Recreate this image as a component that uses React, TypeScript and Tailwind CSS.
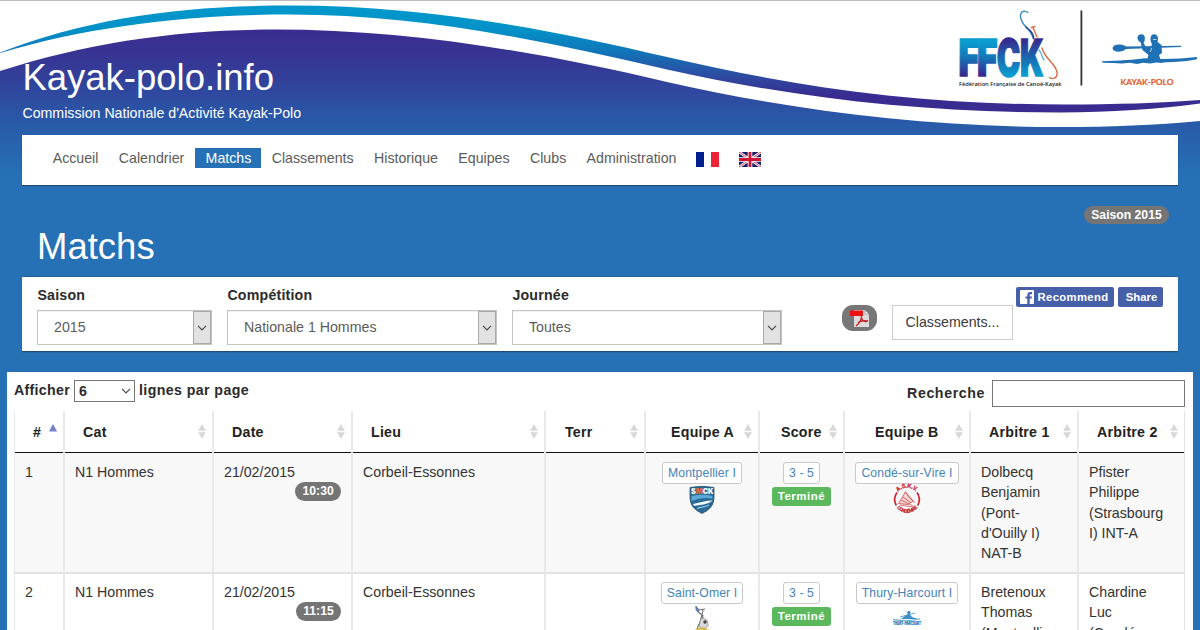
import React from "react";

type Match = {
  id: number;
  time: string;
  teamA: string;
  teamB: string;
  logoA: React.ReactNode;
  logoB: React.ReactNode;
  ref1: string[];
  ref2: string[];
};

function Waves() {
  return (
    <svg className="absolute inset-x-0 top-0 -z-10" width="1200" height="205" viewBox="0 0 1200 205">
      <defs>
        <linearGradient id="sky" gradientUnits="userSpaceOnUse" x1="0" y1="30" x2="0" y2="175">
          <stop offset="0" stopColor="#3a2c90" />
          <stop offset="0.22" stopColor="#363795" />
          <stop offset="0.65" stopColor="#285ba9" />
          <stop offset="1" stopColor="#2670b5" />
        </linearGradient>
        <linearGradient id="band" gradientUnits="userSpaceOnUse" x1="0" y1="5" x2="0" y2="95">
          <stop offset="0" stopColor="#0398cc" />
          <stop offset="0.28" stopColor="#0291c7" />
          <stop offset="0.5" stopColor="#0f78ba" />
          <stop offset="0.8" stopColor="#2f49a0" />
          <stop offset="1" stopColor="#382c91" />
        </linearGradient>
      </defs>
      <rect width="1200" height="205" fill="url(#sky)" />
      <path
        d="M0 0H1200V121C1155 125 1110 127 1060 127C925 127 790 110 667 82C545 53 410 29.500 275 29.500C180 29.500 90 42 0 71Z"
        fill="#fff"
      />
      <path
        d="M0 52.500C90 18 180 5.500 290 5.500C420 5.500 540 27 667 57C800 88 920 104.500 1065 104.500C1115 104.500 1160 103 1200 100V103.500C1160 109 1110 112.500 1060 112.500C925 112.500 800 99 667 69.500C540 40 420 14.500 290 14.500C190 14.500 90 26 0 53Z"
        fill="url(#band)"
      />
      <rect width="1200" height="1" fill="#bdbdbd" />
    </svg>
  );
}

function FederationLogo() {
  return (
    <svg className="absolute left-[950px] top-0" width="250" height="100" viewBox="950 0 250 100">
      <defs>
        <linearGradient id="ff" gradientUnits="userSpaceOnUse" x1="0" y1="38" x2="0" y2="77">
          <stop offset="0.1" stopColor="#0a9dcf" />
          <stop offset="0.5" stopColor="#1475b9" />
          <stop offset="0.95" stopColor="#352b8e" />
        </linearGradient>
        <linearGradient id="ck" gradientUnits="userSpaceOnUse" x1="0" y1="38" x2="0" y2="77">
          <stop offset="0.05" stopColor="#352b8e" />
          <stop offset="0.5" stopColor="#1b67b0" />
          <stop offset="0.95" stopColor="#0a9dcf" />
        </linearGradient>
      </defs>
      <g fontFamily="Inter, 'Liberation Sans', sans-serif" fontWeight="900" fontSize="51.500" strokeLinejoin="miter">
        <g fill="url(#ff)" stroke="url(#ff)" strokeWidth="1.600">
          <text x="958.500" y="76.300" textLength="20.500" lengthAdjust="spacingAndGlyphs">F</text>
          <text x="977" y="76.300" textLength="20.500" lengthAdjust="spacingAndGlyphs">F</text>
        </g>
        <g fill="#fff" stroke="#fff" strokeWidth="4">
          <text x="996.800" y="76.300" textLength="23.500" lengthAdjust="spacingAndGlyphs" aria-hidden="true">C</text>
        </g>
        <g fill="url(#ck)" stroke="url(#ck)" strokeWidth="1.600">
          <text x="996.800" y="76.300" textLength="23.500" lengthAdjust="spacingAndGlyphs">C</text>
          <text x="1020" y="76.300" textLength="23.500" lengthAdjust="spacingAndGlyphs">K</text>
        </g>
      </g>
      <g fill="none" strokeLinecap="round">
        <path d="M1028 12.500C1023 9 1019 13 1021 19C1023 27 1031 29 1033 38" stroke="#2b86bd" strokeWidth="1.300" />
        <path d="M1026 27C1031 31 1033 33 1034 39" stroke="#303c91" strokeWidth="1.500" />
        <path d="M1031.500 27.500L1035 26.500M1033 27.500L1037 37M1042 48C1045 59 1055 63 1057 72C1058 78 1053 80 1049.500 77.500" stroke="#d96a44" strokeWidth="1.400" />
        <path d="M1039 50C1042 53 1042 58 1044 60" stroke="#4fa8d6" strokeWidth="1.200" />
      </g>
      <text x="959" y="85.500" fontFamily="'Open Sans', 'Noto Sans', sans-serif" fontWeight="600" fontSize="5.800" fill="#222" textLength="102.500" lengthAdjust="spacingAndGlyphs">
        Fédération Française de Canoë-Kayak
      </text>
      <rect x="1080.500" y="10.500" width="1.800" height="75" fill="#333" />
      <g fill="#2070b5">
        <path d="M1101.500 61.200C1120 60.500 1134 60 1145 58.300C1162 59.500 1180 59 1196.800 57C1197.500 58 1197 59.300 1196 59.600C1186 61.500 1176 62 1166 62.200L1161 63L1157 62.400L1150 63.500L1143 62.800L1137 64L1130 62.700L1122 63.500L1113 63L1103 62.700Z" />
        <path d="M1112.500 48C1113.500 44 1121 43.500 1126 46.500L1181 45.700L1181 46.900L1126 49C1122 52.500 1113 53 1112.500 48Z" />
        <path d="M1137.500 37.500C1138 33.500 1144.500 33 1144.800 37.500C1145 40 1144.500 42 1143.500 43L1146 47L1151 47L1152 44C1149.500 40 1150 34.500 1154 34.200C1158.500 34.500 1158.500 39 1157.500 42L1161.500 45L1162 53L1159 55L1161 61L1146.500 61L1148.500 55L1142.500 50L1140.500 42C1138.500 41.500 1137.500 40 1137.500 37.500Z" />
      </g>
      <path d="M1153 39.500H1156.500M1150.500 52L1151.500 48" stroke="#d8e9f5" strokeWidth=".8" />
      <text x="1120.500" y="85" fontFamily="Lato, sans-serif" fontWeight="700" fontSize="8.300" fill="#e0602f" stroke="#e0602f" strokeWidth=".2" textLength="53" lengthAdjust="spacingAndGlyphs">
        KAYAK-POLO
      </text>
    </svg>
  );
}

function FrenchFlag() {
  return (
    <svg width="23" height="15" viewBox="0 0 23 15">
      <rect width="8" height="15" fill="#001f8f" />
      <rect x="8" width="7" height="15" fill="#fff" />
      <rect x="15" width="8" height="15" fill="#ee2436" />
    </svg>
  );
}

function BritishFlag() {
  return (
    <svg width="22" height="15" viewBox="0 0 22 15">
      <rect width="22" height="15" fill="#1a1f68" />
      <path d="M0 0L22 15M22 0L0 15" stroke="#fff" strokeWidth="2.600" />
      <path d="M0 0L22 15M22 0L0 15" stroke="#d3314b" strokeWidth=".9" />
      <path d="M11 0V15M0 7.500H22" stroke="#fff" strokeWidth="4.600" />
      <path d="M11 0V15M0 7.500H22" stroke="#cf1533" strokeWidth="2.800" />
    </svg>
  );
}

function Chevron() {
  return (
    <svg width="10" height="6" viewBox="0 0 10 6">
      <path d="M1 .8L5 4.800L9 .8" fill="none" stroke="#4a4a4a" strokeWidth="1.200" />
    </svg>
  );
}

function PdfIcon() {
  return (
    <svg width="20" height="19" viewBox="0 0 20 19">
      <path d="M4 1H15L19 5V18H4Z" fill="#dcdcdc" />
      <path d="M15 1V5H19Z" fill="#fff" stroke="#666" strokeWidth=".5" />
      <rect y="1.500" width="13" height="5.500" fill="#ee1111" />
      <path d="M11.500 5C12 9 11 13 6 17M11.500 9C13 13 16 13.500 18 11.500M8 13.500C11 12 15 11 18 12" fill="none" stroke="#c62323" strokeWidth="1.200" />
    </svg>
  );
}

function MontpellierLogo() {
  return (
    <svg width="26" height="28" viewBox="0 0 26 28">
      <path d="M1 1.500Q13-.8 25 1.500V12Q25 22 13 27.500Q1 22 1 12Z" fill="#2a6a94" stroke="#29506e" strokeWidth=".8" />
      <path d="M2.500 10Q13 7.500 23.500 10V12.500L17 12Q10 12 2.500 15Z" fill="#5aa9d6" />
      <path d="M4 18C10 17 17 14 23.500 14.500C19 19 11 18.500 5 20Z" fill="#f4fbff" />
      <path d="M8 22.500C13 20.500 17 21 20 19" fill="none" stroke="#8dcbe9" strokeWidth="1.200" />
      <text x="2" y="8.300" fontFamily="Inter, sans-serif" fontWeight="900" fontSize="7.500" fill="#fff" textLength="22.500" lengthAdjust="spacingAndGlyphs">
        S<tspan fill="#e8663a">M</tspan>CK
      </text>
    </svg>
  );
}

function CondeLogo() {
  return (
    <svg className="overflow-visible" width="28" height="28" viewBox="0 0 28 28">
      <defs>
        <path id="condeTop" d="M5 5.800A12 12 0 0 1 23 5.800" />
        <path id="condeBottom" d="M2.500 19.500A12.700 12.700 0 0 0 25.500 19.500" />
      </defs>
      <path d="M4 6.500A12.300 12.300 0 0 0 3.300 19.500M24 6.500A12.300 12.300 0 0 1 24.700 19.500" fill="none" stroke="#c9262e" strokeWidth="1.700" />
      <path d="M12.500 5.500L8.500 13L5.500 17.500L15 18.500L20 15L16 11Z" fill="#f6d3d2" stroke="#cf4a4a" strokeWidth=".8" />
      <path d="M8 14L20 20M10 11L18 17M13 7L22 17M7 19L20 21" fill="none" stroke="#cb3c3e" strokeWidth=".7" />
      <g fontFamily="'Liberation Sans', sans-serif" fontWeight="700" fill="#c4222a" stroke="#c4222a" strokeWidth=".25">
        <text fontSize="5.800">
          <textPath href="#condeTop" textLength="20">A.S.K.V.</textPath>
        </text>
        <text fontSize="4.800">
          <textPath href="#condeBottom" startOffset="2.500" textLength="24">CONDÉ/VIRE</textPath>
        </text>
      </g>
    </svg>
  );
}

function SaintOmerLogo() {
  return (
    <svg width="22" height="28" viewBox="0 0 22 28">
      <path d="M5 1L8 4L14 3M6 5L11 9L9 16L6 23M11 9L12 4M12 9L11 18" fill="none" stroke="#6a6a70" strokeWidth="1.100" />
      <path d="M5 0L5.500 4L8 5" fill="none" stroke="#5674bd" strokeWidth="1.500" />
      <path d="M10 12Q18 12 17 20Q13 25 8 20Z" fill="#d8d7d9" stroke="#777" strokeWidth=".6" />
      <circle cx="14" cy="16" r="1.700" fill="#4b3c3c" />
      <path d="M4 25Q9 20 18 25" fill="none" stroke="#d5b43a" strokeWidth="1.800" />
    </svg>
  );
}

function ThuryLogo() {
  return (
    <svg width="30" height="28" viewBox="0 0 30 28">
      <path d="M9 13Q14 9 16 8L14 5L17 7.500L20 11L26 13Z" fill="#3b8fc8" />
      <path d="M8 11L23 7" stroke="#3b8fc8" strokeWidth=".8" />
      <circle cx="17" cy="6.500" r="1.400" fill="#2a7fbf" />
      <path d="M1 13.500Q15 16 28 12.800" fill="none" stroke="#77b6dd" strokeWidth="1.300" />
      <text x="1" y="18.800" fontFamily="Inter, sans-serif" fontWeight="900" fontSize="4.300" fill="#1b66a5" textLength="28" lengthAdjust="spacingAndGlyphs">
        THURY-HARCOURT
      </text>
    </svg>
  );
}

const nav = ["Accueil", "Calendrier", "Matchs", "Classements", "Historique", "Equipes", "Clubs", "Administration"];

const columns = [
  { label: "#", pad: "pl-[18px]" },
  { label: "Cat", pad: "pl-[18px]" },
  { label: "Date", pad: "pl-[18px]" },
  { label: "Lieu", pad: "pl-[18px]" },
  { label: "Terr", pad: "pl-[19px]" },
  { label: "Equipe A", pad: "pl-[25px]" },
  { label: "Score", pad: "pl-[21px]" },
  { label: "Equipe B", pad: "pl-[30px]" },
  { label: "Arbitre 1", pad: "pl-[18px]" },
  { label: "Arbitre 2", pad: "pl-[18px]" },
];

const grid = "grid grid-cols-[51px_149px_139px_193px_100px_114px_85px_126px_108px_106px]";
const cell = "border-r-2 border-r-[#e9e9e9] first:border-l first:border-l-[#e9e9e9] last:border-r last:border-r-[#e4e4e4]";

const matches: Match[] = [
  {
    id: 1,
    time: "10:30",
    teamA: "Montpellier I",
    teamB: "Condé-sur-Vire I",
    logoA: <MontpellierLogo />,
    logoB: <CondeLogo />,
    ref1: ["Dolbecq", "Benjamin", "(Pont-", "d'Ouilly I)", "NAT-B"],
    ref2: ["Pfister", "Philippe", "(Strasbourg", "I) INT-A"],
  },
  {
    id: 2,
    time: "11:15",
    teamA: "Saint-Omer I",
    teamB: "Thury-Harcourt I",
    logoA: <SaintOmerLogo />,
    logoB: <ThuryLogo />,
    ref1: ["Bretenoux", "Thomas", "(Montpellier"],
    ref2: ["Chardine", "Luc", "(Condé-"],
  },
];

function Select({ label, value, className }: { label: string; value: string; className: string }) {
  return (
    <div className={className}>
      <div className="h-[25px] pl-[0.400px] font-bold leading-[20px] tracking-[0.2px] text-[#2b2b2b]">{label}</div>
      <div className="flex h-[35px] border border-[#c4c4c4] bg-white text-[#5c5c5c] shadow-[inset_0_1px_1px_rgba(0,0,0,0.06)]">
        <div className="flex-1 pl-[16px] leading-[33px]">{value}</div>
        <div className="flex w-[18px] items-center justify-center border border-[#a9a9a9] bg-[#e2e2e2]">
          <Chevron />
        </div>
      </div>
    </div>
  );
}

function SortIcon({ active }: { active: boolean }) {
  return active ? (
    <svg className="mt-[13px]" width="8" height="8" viewBox="0 0 8 8">
      <path d="M4 0L8 7.500H0Z" fill="#777fcb" />
    </svg>
  ) : (
    <svg className="mt-[13px]" width="8" height="15" viewBox="0 0 8 15">
      <path d="M4 0L8 6.700H0ZM0 8.300H8L4 15Z" fill="#d8d8d8" />
    </svg>
  );
}

function Pill({ children }: { children: string }) {
  return (
    <span className="inline-block h-[18.500px] rounded-full bg-[#757575] px-[7.300px] text-[12.200px] font-bold leading-[18px] text-white">
      {children}
    </span>
  );
}

function Team({ name, logo }: { name: string; logo: React.ReactNode }) {
  return (
    <div className={`${cell} flex flex-col items-center pt-[9px]`}>
      <LinkBox>{name}</LinkBox>
      <div className="mt-[2px]">{logo}</div>
    </div>
  );
}

function LinkBox({ children }: { children: string }) {
  return (
    <span className="h-[22px] whitespace-nowrap rounded-[3px] border border-[#c9c9c9] bg-white px-[5px] text-[12.200px] leading-[20px] tracking-[0.120px] text-[#4483b8]">
      {children}
    </span>
  );
}

export default function App() {
  return (
    <div className="relative isolate h-[630px] w-[1200px] overflow-hidden bg-[#2670b5] font-['Liberation_Sans',Arial,sans-serif] text-[14.200px] leading-[20.300px]">
      <Waves />
      <FederationLogo />

      <header className="h-[135px] pl-[22.400px] pt-[58px] text-white">
        <h1 className="text-[36.500px] leading-[40px]">Kayak-polo.info</h1>
        <p className="mt-[5px] leading-[20px]">Commission Nationale d'Activité Kayak-Polo</p>
      </header>

      <nav className="mx-[22px] flex h-[50px] bg-white pl-[20.500px] pt-[13px] leading-[20px] text-[#5b5b5b] shadow-[0_1px_1px_#1e4a75]">
        {nav.map((item) => (
          <a
            key={item}
            className={
              item === "Matchs"
                ? "ml-px h-[20px] bg-[#2670b5] px-[10.150px] text-white"
                : "h-[20px] px-[10.200px]"
            }
          >
            {item}
          </a>
        ))}
        <div className="ml-[9.700px] mt-[4px] flex gap-[20px]">
          <FrenchFlag />
          <BritishFlag />
        </div>
      </nav>

      <div className="flex h-[92px] justify-between pl-[37px] pr-[31px]">
        <h2 className="pt-[42px] text-[36.500px] leading-[40px] text-white">Matchs</h2>
        <div className="flex items-start pt-[20.500px]">
          <Pill>Saison 2015</Pill>
        </div>
      </div>

      <section className="mx-[22px] flex h-[74px] bg-white pl-[15px] pr-[15px] pt-[8px] shadow-[0_1px_1px_#1e4a75,0_-1px_0_#24619b]">
        <Select label="Saison" value="2015" className="w-[175px]" />
        <Select label="Compétition" value="Nationale 1 Hommes" className="ml-[15px] w-[270px]" />
        <Select label="Journée" value="Toutes" className="ml-[15px] w-[270px]" />
        <div className="ml-[60px] mt-[20px] flex h-[26px] w-[35px] items-center justify-center rounded-[11px] bg-[#777]">
          <PdfIcon />
        </div>
        <div className="ml-[15px] mt-[20px] h-[35px] w-[121px] border border-[#ccc] text-center leading-[33px] text-[#3a3a3a]">
          Classements...
        </div>
        <div className="ml-[2.500px] mt-[2px] flex h-[20px] gap-[4px] text-[11.300px] font-bold leading-[20px] text-white">
          <div className="flex w-[98.500px] items-center rounded-[2px] bg-[#4560a8] pl-[4px] tracking-[0.350px]">
            <svg width="14" height="14" viewBox="0 0 14 14">
              <rect width="14" height="14" rx="1" fill="#fff" />
              <path d="M7.300 14V8.600H5.500V6.400H7.300V5C7.300 3 8.400 2 10.300 2H12V4.200H10.800C10 4.200 9.700 4.500 9.700 5.200V6.400H12L11.700 8.600H9.700V14Z" fill="#4560a8" />
            </svg>
            <span className="ml-[4px]">Recommend</span>
          </div>
          <div className="w-[45px] rounded-[2px] bg-[#4560a8] pl-[2px] text-center">Share</div>
        </div>
      </section>

      <main className="mx-[7px] mt-[21px] h-[260px] bg-white px-[7px] text-[#333]">
        <div className="flex h-[39px] justify-between pr-px pt-[8px] font-bold text-[#2b2b2b]">
          <div className="flex gap-[4px] leading-[21px]">
            <span className="w-[56px] tracking-[0.300px]">Afficher</span>
            <span className="flex h-[22px] w-[61px] items-center justify-between border border-[#777] pl-[4px] pr-[3px]">
              6
              <Chevron />
            </span>
            <span className="tracking-[0.400px]">lignes par page</span>
          </div>
          <div className="flex gap-[7px] leading-[27px]">
            <span className="tracking-[0.600px]">Recherche</span>
            <span className="h-[27px] w-[193px] border border-[#777] bg-white" />
          </div>
        </div>

        <div className={`${grid} h-[42px] font-bold text-[#222]`}>
          {columns.map((c, i) => (
            <div key={c.label} className={`${cell} ${c.pad} flex justify-between whitespace-nowrap pr-[6px] shadow-[inset_0_-1px_0_#111]`}>
              <span className="pt-[11px] leading-[20px] tracking-[0.250px]">{c.label}</span>
              <SortIcon active={i === 0} />
            </div>
          ))}
        </div>

        {matches.map((m) => (
          <div
            key={m.id}
            className={`${grid} ${
              m.id === 1 ? "h-[121px] w-[1171px] border-b-2 border-[#e2e2e2] bg-[#f8f8f8]" : "-mt-px h-[121px] w-[1171px]"
            }`}
          >
            <div className={`${cell} pl-[10px] pt-[9px]`}>{m.id}</div>
            <div className={`${cell} pl-[10px] pt-[9px]`}>N1 Hommes</div>
            <div className={`${cell} pl-[10px] pr-[10px] pt-[9px]`}>
              <div className="h-[20px]">21/02/2015</div>
              <div className="flex justify-end">
                <Pill>{m.time}</Pill>
              </div>
            </div>
            <div className={`${cell} pl-[10px] pt-[9px]`}>Corbeil-Essonnes</div>
            <div className={cell} />
            <Team name={m.teamA} logo={m.logoA} />
            <div className={`${cell} flex flex-col items-center pt-[9px]`}>
              <LinkBox>3 - 5</LinkBox>
              <span className="mt-[3px] h-[18.500px] rounded-[3px] bg-[#5cb85c] px-[6px] text-[11.500px] font-bold leading-[18px] tracking-[0.500px] text-white">
                Terminé
              </span>
            </div>
            <Team name={m.teamB} logo={m.logoB} />
            <div className={`${cell} whitespace-nowrap pl-[10px] pt-[9px]`}>
              {m.ref1.map((l) => (
                <div key={l}>{l}</div>
              ))}
            </div>
            <div className={`${cell} whitespace-nowrap pl-[10px] pt-[9px]`}>
              {m.ref2.map((l) => (
                <div key={l}>{l}</div>
              ))}
            </div>
          </div>
        ))}
      </main>
    </div>
  );
}
